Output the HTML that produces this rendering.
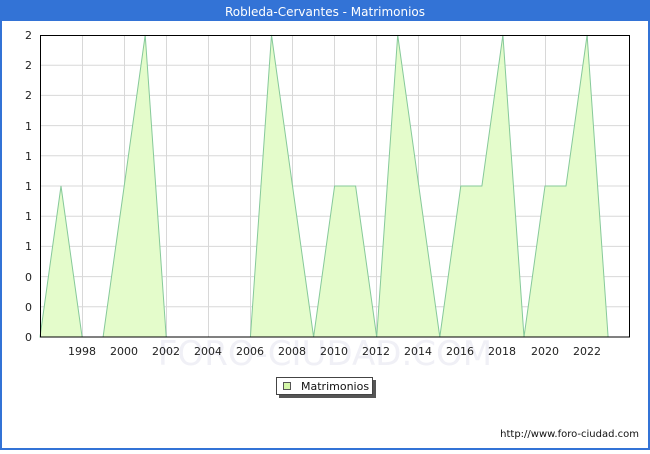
<!DOCTYPE html>
<html><head><meta charset="utf-8"><style>
html,body{margin:0;padding:0;background:#fff}
body{width:650px;height:450px;overflow:hidden;font-family:"DejaVu Sans","Liberation Sans",sans-serif}
</style></head><body>
<svg width="650" height="450" xmlns="http://www.w3.org/2000/svg" font-family="DejaVu Sans, Liberation Sans, sans-serif">
<rect x="0" y="0" width="650" height="450" fill="#3373d6"/>
<rect x="2" y="21" width="646" height="427" fill="#fff"/>
<text x="325" y="16" fill="#fff" font-size="12" text-anchor="middle">Robleda-Cervantes - Matrimonios</text>
<g stroke="#d8d8d8" stroke-width="1">
<line x1="40" y1="65.2" x2="630" y2="65.2"/><line x1="40" y1="95.4" x2="630" y2="95.4"/><line x1="40" y1="125.6" x2="630" y2="125.6"/><line x1="40" y1="155.8" x2="630" y2="155.8"/><line x1="40" y1="186" x2="630" y2="186"/><line x1="40" y1="216.2" x2="630" y2="216.2"/><line x1="40" y1="246.4" x2="630" y2="246.4"/><line x1="40" y1="276.6" x2="630" y2="276.6"/><line x1="40" y1="306.8" x2="630" y2="306.8"/>
<line x1="82.5" y1="35" x2="82.5" y2="337"/><line x1="124.5" y1="35" x2="124.5" y2="337"/><line x1="166.5" y1="35" x2="166.5" y2="337"/><line x1="208.5" y1="35" x2="208.5" y2="337"/><line x1="250.5" y1="35" x2="250.5" y2="337"/><line x1="292.5" y1="35" x2="292.5" y2="337"/><line x1="334.5" y1="35" x2="334.5" y2="337"/><line x1="376.5" y1="35" x2="376.5" y2="337"/><line x1="418.5" y1="35" x2="418.5" y2="337"/><line x1="460.5" y1="35" x2="460.5" y2="337"/><line x1="502.5" y1="35" x2="502.5" y2="337"/><line x1="545.5" y1="35" x2="545.5" y2="337"/><line x1="587.5" y1="35" x2="587.5" y2="337"/>
</g>
<text x="325" y="365" fill="#f0f0f6" font-size="34" text-anchor="middle">FORO-CIUDAD.COM</text>
<polygon fill="#e4fccb" stroke="#86c99a" stroke-width="1" points="40,337 61,186 82.1,337 103.1,337 124.2,186 145.2,35 166.2,337 250.4,337 271.5,35 292.5,186 313.6,337 334.6,186 355.6,186 376.7,337 397.7,35 418.8,186 439.8,337 460.8,186 481.9,186 502.9,35 524,337 545,186 566,186 587.1,35 608.1,337"/>
<rect x="40.5" y="35.5" width="589" height="301.5" fill="none" stroke="#000" stroke-width="1"/>
<g font-size="11" fill="#222" text-anchor="end">
<text x="32" y="39">2</text><text x="32" y="69">2</text><text x="32" y="99">2</text><text x="32" y="130">1</text><text x="32" y="160">1</text><text x="32" y="190">1</text><text x="32" y="220">1</text><text x="32" y="250">1</text><text x="32" y="281">0</text><text x="32" y="311">0</text><text x="32" y="341">0</text>
</g>
<g font-size="11" fill="#222" text-anchor="middle">
<text x="82" y="355">1998</text><text x="124" y="355">2000</text><text x="166" y="355">2002</text><text x="208" y="355">2004</text><text x="250" y="355">2006</text><text x="292" y="355">2008</text><text x="334" y="355">2010</text><text x="376" y="355">2012</text><text x="418" y="355">2014</text><text x="460" y="355">2016</text><text x="502" y="355">2018</text><text x="545" y="355">2020</text><text x="587" y="355">2022</text>
</g>
<rect x="279" y="380" width="97" height="18" fill="#555"/>
<rect x="276.5" y="377.5" width="96" height="17" fill="#fff" stroke="#444"/>
<rect x="283.5" y="382.5" width="7" height="7" fill="#d4f7a8" stroke="#555"/>
<text x="301" y="390" font-size="11" fill="#111">Matrimonios</text>
<text x="639" y="437" font-size="10" fill="#111" text-anchor="end">http://www.foro-ciudad.com</text>
</svg>
</body></html>
